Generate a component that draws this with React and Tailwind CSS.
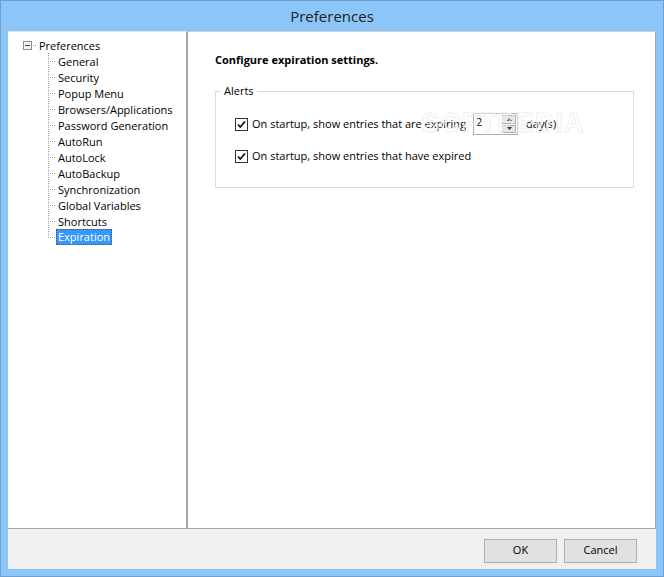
import React from "react";

const items = [
  "General",
  "Security",
  "Popup Menu",
  "Browsers/Applications",
  "Password Generation",
  "AutoRun",
  "AutoLock",
  "AutoBackup",
  "Synchronization",
  "Global Variables",
  "Shortcuts",
  "Expiration",
];

function Connector({ last }) {
  const dotsV = [];
  const max = last ? 9 : 16;
  for (let y = 0; y < max; y += 2) dotsV.push(<rect key={"v" + y} x="0" y={y} width="1" height="1" fill="#a0a0a0" />);
  const dotsH = [];
  for (let x = 2; x < 8; x += 2) dotsH.push(<rect key={"h" + x} x={x} y="8" width="1" height="1" fill="#a0a0a0" />);
  return (
    <svg width="8" height="16" shapeRendering="crispEdges" className="shrink-0">
      {dotsV}
      {dotsH}
    </svg>
  );
}

function Check() {
  return (
    <div className="w-[13px] h-[13px] border border-[#333] bg-white flex items-center justify-center shrink-0">
      <svg width="11" height="11" viewBox="0 0 11 11">
        <path d="M2 5.5 L4.3 8 L9 2.5" stroke="#111" strokeWidth="1.8" fill="none" />
      </svg>
    </div>
  );
}

export default function App() {
  return (
    <div className="w-[664px] h-[577px] bg-[#8cc5f8] border border-[#6f9fd2] flex flex-col font-['Open_Sans',sans-serif] text-[11px] text-black">
      <div className="h-[30px] flex items-center justify-center text-[15px] text-[#222] shrink-0">
        Preferences
      </div>
      <div className="flex-1 mx-[7px] mb-[7px] bg-[#f0f0f0] flex flex-col">
        <div className="flex h-[498px]">
          <div className="w-[180px] bg-white border-r-2 border-b border-[#a5a5a5] border-t border-t-[#e6e6e6] pl-[15px] pt-[5px]">
            <div className="flex items-center h-[16px]">
              <div className="w-[9px] h-[9px] border border-[#8f8f8f] bg-[#f4f4f4] flex items-center justify-center shrink-0">
                <div className="w-[5px] h-[1px] bg-[#2b4a73]" />
              </div>
              <svg width="5" height="16" shapeRendering="crispEdges" className="shrink-0">
                <rect x="1" y="8" width="1" height="1" fill="#a0a0a0" />
                <rect x="3" y="8" width="1" height="1" fill="#a0a0a0" />
              </svg>
              <span className="px-[2px] leading-[16px] pt-[1px]">Preferences</span>
            </div>
            <div className="pl-[25px]">
              {items.map((t, i) => (
                <div key={t} className="flex items-center h-[16px]">
                  <Connector last={i === items.length - 1} />
                  {i === items.length - 1 ? (
                    <span className="px-[1px] h-[16px] leading-[14px] bg-[#3399ff] text-white border border-dotted border-[#555]">
                      {t}
                    </span>
                  ) : (
                    <span className="px-[2px] leading-[16px] pt-[1px]">{t}</span>
                  )}
                </div>
              ))}
            </div>
          </div>
          <div className="flex-1 bg-white border-t border-[#cfcfcf] border-r border-r-[#a5a5a5] border-b border-b-[#a5a5a5] pl-[27px] pr-[21px] pt-[20px] relative">
            <div className="font-bold leading-[16px]">Configure expiration settings.</div>
            <div className="relative mt-[23px] border border-[#dcdcdc] h-[97px] px-[19px] pt-[21px]">
              <span className="absolute -top-[8px] left-[5px] px-[3px] bg-white leading-[14px]">Alerts</span>
              <div className="flex items-center h-[22px]">
                <Check />
                <span className="ml-[4px]">On startup, show entries that are expiring</span>
                <div className="ml-[7px] w-[45px] h-[22px] border border-[#abadb3] bg-white flex">
                  <span className="flex-1 pl-[2px] leading-[16px]">2</span>
                  <div className="w-[15px] flex flex-col gap-[1px] p-[1px] pl-0">
                    <div className="flex-1 bg-[#e6e6e6] border border-[#b0b0b0] flex items-center justify-center">
                      <svg width="5" height="3" viewBox="0 0 5 3"><path d="M2.5 0 L5 3 L0 3Z" fill="#333" /></svg>
                    </div>
                    <div className="flex-1 bg-[#e6e6e6] border border-[#b0b0b0] flex items-center justify-center">
                      <svg width="5" height="3" viewBox="0 0 5 3"><path d="M0 0 L5 0 L2.5 3Z" fill="#333" /></svg>
                    </div>
                  </div>
                </div>
                <span className="ml-[8px]">day(s)</span>
              </div>
              <div className="flex items-center h-[22px] mt-[10px]">
                <Check />
                <span className="ml-[4px]">On startup, show entries that have expired</span>
              </div>
            </div>
            <div className="absolute left-[233px] top-[77px] text-[27px] leading-[28px] font-bold tracking-[1px] text-transparent [-webkit-text-stroke:1px_#efefef] pointer-events-none font-['Liberation_Sans',sans-serif]">
              SOFTPEDIA
            </div>
          </div>
        </div>
        <div className="flex-1 flex items-center justify-end gap-[7px] pr-[19px] pt-[3px]">
          <button className="w-[73px] h-[24px] bg-[#e1e1e1] border border-[#adadad] text-[11px]">OK</button>
          <button className="w-[73px] h-[24px] bg-[#e1e1e1] border border-[#adadad] text-[11px]">Cancel</button>
        </div>
      </div>
    </div>
  );
}
